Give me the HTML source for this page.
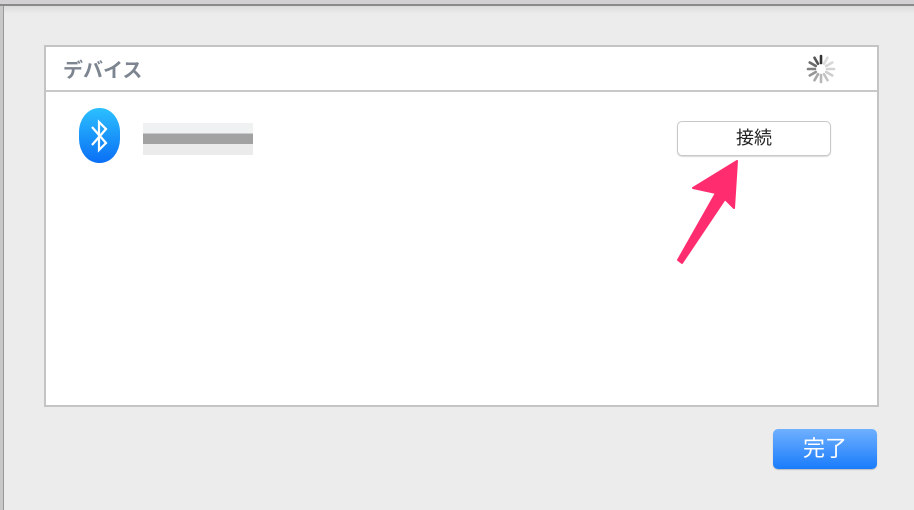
<!DOCTYPE html>
<html><head><meta charset="utf-8"><style>
html,body{margin:0;padding:0}
body{width:914px;height:510px;background:#ececec;position:relative;overflow:hidden;font-family:"Liberation Sans","Noto Sans CJK JP",sans-serif}
.top{position:absolute;left:0;top:0;width:914px;height:4px;background:#d2d0d2}
.topline{position:absolute;left:0;top:4px;width:914px;height:2px;background:#8a8a8a}
.shade{position:absolute;left:0;top:6px;width:914px;height:8px;background:linear-gradient(#dcdcdc,#ececec)}
.left{position:absolute;left:0;top:6px;width:3px;height:504px;background:#c8c8c8;border-right:1px solid #999}
.panel{position:absolute;left:44px;top:45px;width:831px;height:358px;background:#fff;border:2px solid #c4c4c4}
.hdr{height:43px;border-bottom:2px solid #c8c8c8;position:relative}
.hdr span{position:absolute;left:17px;top:7px;font-size:20px;font-weight:bold;color:#7d8590}
.btn{position:absolute;left:677px;top:121px;width:152px;height:33px;border:1px solid #c8c8c8;border-radius:5px;background:#fff;box-shadow:0 1px 1px rgba(0,0,0,.15);text-align:center;line-height:33px;font-size:18px;color:#222}
.done{position:absolute;left:773px;top:429px;width:104px;height:40px;border-radius:5px;background:linear-gradient(#6fb0ff,#1a7cfb);text-align:center;line-height:40px;font-size:22px;color:#fff;box-shadow:0 1px 1px rgba(0,0,0,.2)}
.blur{position:absolute;left:143px;top:123px;width:110px;height:32px;background:linear-gradient(#eceeef 0 33%,#8a8a8a 33% 66%,#e6e6e6 66%);opacity:.8}
</style></head><body>
<div class="top"></div><div class="topline"></div><div class="shade"></div><div class="left"></div>
<div class="panel"><div class="hdr"><span>デバイス</span></div></div>
<svg style="position:absolute;left:0;top:0" width="914" height="510">
<defs><linearGradient id="g" x1="0" y1="0" x2="0" y2="1"><stop offset="0" stop-color="#2cc0ff"/><stop offset="1" stop-color="#0a6ff5"/></linearGradient></defs>
<rect x="79" y="108" width="41" height="55" rx="20" ry="24" fill="url(#g)"/>
<path d="M92 127 L106 143 L99 150 L99 122 L106 129 L92 145" fill="none" stroke="#fff" stroke-width="2.2" stroke-linejoin="miter"/>
<g transform="translate(821,69)" stroke-width="2.6" stroke-linecap="round">
<line x1="0" y1="-6" x2="0" y2="-13" stroke="#333"/>
<line x1="0" y1="-6" x2="0" y2="-13" stroke="#555" transform="rotate(-30)"/>
<line x1="0" y1="-6" x2="0" y2="-13" stroke="#6a6a6a" transform="rotate(-60)"/>
<line x1="0" y1="-6" x2="0" y2="-13" stroke="#808080" transform="rotate(-90)"/>
<line x1="0" y1="-6" x2="0" y2="-13" stroke="#959595" transform="rotate(-120)"/>
<line x1="0" y1="-6" x2="0" y2="-13" stroke="#a8a8a8" transform="rotate(-150)"/>
<line x1="0" y1="-6" x2="0" y2="-13" stroke="#b8b8b8" transform="rotate(180)"/>
<line x1="0" y1="-6" x2="0" y2="-13" stroke="#c4c4c4" transform="rotate(150)"/>
<line x1="0" y1="-6" x2="0" y2="-13" stroke="#cdcdcd" transform="rotate(120)"/>
<line x1="0" y1="-6" x2="0" y2="-13" stroke="#d4d4d4" transform="rotate(90)"/>
<line x1="0" y1="-6" x2="0" y2="-13" stroke="#d8d8d8" transform="rotate(60)"/>
<line x1="0" y1="-6" x2="0" y2="-13" stroke="#dcdcdc" transform="rotate(30)"/>
</g>
<path d="M737 161 L734 208 L725 199 L682 263 L678 260 L716 193 L693 188 Z" fill="#ff2d6f" stroke="#ff2d6f" stroke-width="2" stroke-linejoin="round"/>
</svg>
<div class="blur"></div>
<div class="btn">接続</div>
<div class="done">完了</div>
</body></html>
